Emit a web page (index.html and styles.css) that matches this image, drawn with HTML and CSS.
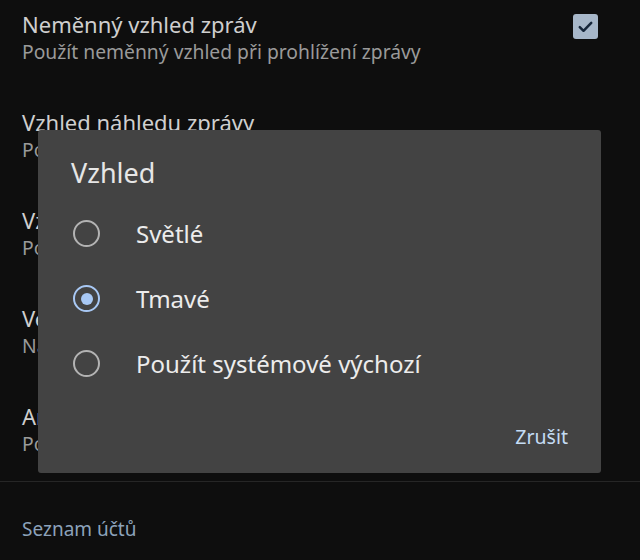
FILE: index.html
```html
<!DOCTYPE html>
<html lang="cs">
<head>
<meta charset="utf-8">
<link rel="stylesheet" href="styles.css">
</head>
<body>
<div class="screen">
  <ul class="prefs">
    <li class="pref">
      <div class="pref-text">
        <div class="pref-title">Neměnný vzhled zpráv</div>
        <div class="pref-sub">Použít neměnný vzhled při prohlížení zprávy</div>
      </div>
      <span class="checkbox">
        <svg viewBox="0 0 24 24" width="25" height="25"><path d="M6.5 12.5l3.6 3.6 7.4-7.6" fill="none" stroke="#16263a" stroke-width="2.4" stroke-linecap="round" stroke-linejoin="round"/></svg>
      </span>
    </li>
    <li class="pref">
      <div class="pref-text">
        <div class="pref-title">Vzhled náhledu zprávy</div>
        <div class="pref-sub">Použít tmavý vzhled</div>
      </div>
    </li>
    <li class="pref">
      <div class="pref-text">
        <div class="pref-title">Vzhled</div>
        <div class="pref-sub">Použít</div>
      </div>
    </li>
    <li class="pref">
      <div class="pref-text">
        <div class="pref-title">Velikost</div>
        <div class="pref-sub">Nastavit</div>
      </div>
    </li>
    <li class="pref">
      <div class="pref-text">
        <div class="pref-title">Animace</div>
        <div class="pref-sub">Použít</div>
      </div>
    </li>
  </ul>
  <div class="divider"></div>
  <div class="section-link">Seznam účtů</div>

  <div class="dialog">
    <div class="dialog-title">Vzhled</div>
    <div class="options">
      <div class="option"><span class="radio"></span><span class="option-label">Světlé</span></div>
      <div class="option"><span class="radio checked"></span><span class="option-label">Tmavé</span></div>
      <div class="option"><span class="radio"></span><span class="option-label">Použít systémové výchozí</span></div>
    </div>
    <div class="actions"><span class="btn">Zrušit</span></div>
  </div>
</div>
</body>
</html>
```
FILE: styles.css
```css
html, body {
  margin: 0;
  padding: 0;
  background: #0e0e0e;
}
body {
  font-family: "Noto Sans", Roboto, sans-serif;
  width: 640px;
  height: 560px;
  overflow: hidden;
}
.screen {
  position: relative;
  width: 640px;
  height: 560px;
  overflow: hidden;
  background: #0e0e0e;
}
.prefs {
  list-style: none;
  margin: -11px 0 0 0;
  padding: 0;
}
.pref {
  height: 98px;
  box-sizing: border-box;
  padding: 22px 42px 22px 22px;
  display: flex;
  align-items: flex-start;
  justify-content: space-between;
}
.pref-title {
  font-size: 22px;
  line-height: 26px;
  color: #cfcfcf;
}
.pref-sub {
  margin-top: 2px;
  font-size: 19.3px;
  line-height: 26px;
  color: #9a9a9a;
}
.checkbox {
  width: 25px;
  height: 25px;
  border-radius: 3px;
  background: #a7b7c9;
  margin-top: 3px;
  display: flex;
}
.divider {
  height: 1px;
  background: #262626;
  margin-top: 2px;
}
.section-link {
  padding: 35px 22px 0;
  font-size: 19px;
  line-height: 24px;
  color: #8ca2ba;
}
.dialog {
  position: absolute;
  left: 38px;
  top: 130px;
  width: 563px;
  height: 343px;
  box-sizing: border-box;
  background: #434343;
  border-radius: 3px;
  padding: 26px 33px 0 33px;
  display: flex;
  flex-direction: column;
}
.dialog-title {
  font-size: 27px;
  line-height: 34px;
  color: #e6e6e6;
}
.options {
  margin-top: 11px;
  display: flex;
  flex-direction: column;
}
.option {
  height: 65px;
  display: flex;
  align-items: center;
}
.radio {
  width: 27px;
  height: 27px;
  box-sizing: border-box;
  border: 2.5px solid #b3b3b3;
  border-radius: 50%;
  margin-left: 2px;
  display: flex;
  align-items: center;
  justify-content: center;
}
.radio.checked {
  border-color: #a8c8f4;
}
.radio.checked::after {
  content: "";
  width: 12px;
  height: 12px;
  border-radius: 50%;
  background: #a8c8f4;
}
.option-label {
  margin-left: 36px;
  font-size: 24px;
  color: #ececec;
}
.actions {
  margin-top: 27px;
  display: flex;
  justify-content: flex-end;
}
.btn {
  font-size: 19.5px;
  line-height: 28px;
  color: #c4dcf4;
}
```
